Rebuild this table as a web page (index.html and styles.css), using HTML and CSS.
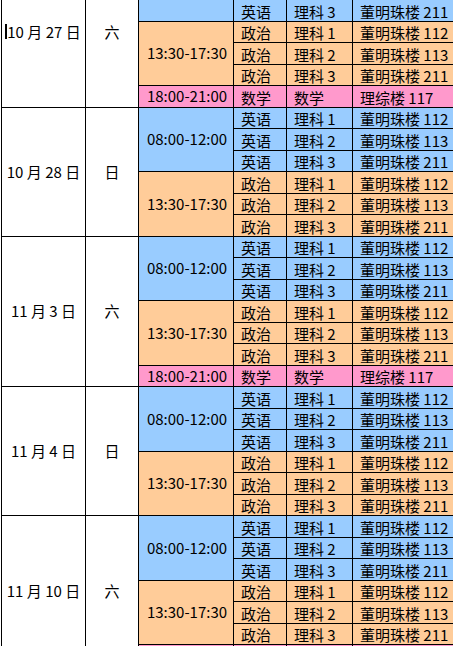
FILE: index.html
```html
<!DOCTYPE html>
<html lang="zh-CN">
<head>
<meta charset="utf-8">
<title>考试安排</title>
<link rel="stylesheet" href="styles.css">
</head>
<body>
<div class="viewport">
  <div class="sheet">
    <!-- 10月27日 -->
    <div class="c date r7"><span class="dtext caret-host">10 月 27 日</span></div>
    <div class="c day r7">六</div>
    <div class="c time am r3">08:00-12:00</div>
    <div class="c subj am">英语</div><div class="c course am">理科 1</div><div class="c room am">董明珠楼 112</div>
    <div class="c subj am">英语</div><div class="c course am">理科 2</div><div class="c room am">董明珠楼 113</div>
    <div class="c subj am">英语</div><div class="c course am">理科 3</div><div class="c room am">董明珠楼 211</div>
    <div class="c time pm r3">13:30-17:30</div>
    <div class="c subj pm">政治</div><div class="c course pm">理科 1</div><div class="c room pm">董明珠楼 112</div>
    <div class="c subj pm">政治</div><div class="c course pm">理科 2</div><div class="c room pm">董明珠楼 113</div>
    <div class="c subj pm">政治</div><div class="c course pm">理科 3</div><div class="c room pm">董明珠楼 211</div>
    <div class="c time ev">18:00-21:00</div>
    <div class="c subj ev">数学</div><div class="c course ev">数学</div><div class="c room ev">理综楼 117</div>

    <!-- 10月28日 -->
    <div class="c date r6">10 月 28 日</div>
    <div class="c day r6">日</div>
    <div class="c time am r3">08:00-12:00</div>
    <div class="c subj am">英语</div><div class="c course am">理科 1</div><div class="c room am">董明珠楼 112</div>
    <div class="c subj am">英语</div><div class="c course am">理科 2</div><div class="c room am">董明珠楼 113</div>
    <div class="c subj am">英语</div><div class="c course am">理科 3</div><div class="c room am">董明珠楼 211</div>
    <div class="c time pm r3">13:30-17:30</div>
    <div class="c subj pm">政治</div><div class="c course pm">理科 1</div><div class="c room pm">董明珠楼 112</div>
    <div class="c subj pm">政治</div><div class="c course pm">理科 2</div><div class="c room pm">董明珠楼 113</div>
    <div class="c subj pm">政治</div><div class="c course pm">理科 3</div><div class="c room pm">董明珠楼 211</div>

    <!-- 11月3日 -->
    <div class="c date r7">11 月 3 日</div>
    <div class="c day r7">六</div>
    <div class="c time am r3">08:00-12:00</div>
    <div class="c subj am">英语</div><div class="c course am">理科 1</div><div class="c room am">董明珠楼 112</div>
    <div class="c subj am">英语</div><div class="c course am">理科 2</div><div class="c room am">董明珠楼 113</div>
    <div class="c subj am">英语</div><div class="c course am">理科 3</div><div class="c room am">董明珠楼 211</div>
    <div class="c time pm r3">13:30-17:30</div>
    <div class="c subj pm">政治</div><div class="c course pm">理科 1</div><div class="c room pm">董明珠楼 112</div>
    <div class="c subj pm">政治</div><div class="c course pm">理科 2</div><div class="c room pm">董明珠楼 113</div>
    <div class="c subj pm">政治</div><div class="c course pm">理科 3</div><div class="c room pm">董明珠楼 211</div>
    <div class="c time ev">18:00-21:00</div>
    <div class="c subj ev">数学</div><div class="c course ev">数学</div><div class="c room ev">理综楼 117</div>

    <!-- 11月4日 -->
    <div class="c date r6">11 月 4 日</div>
    <div class="c day r6">日</div>
    <div class="c time am r3">08:00-12:00</div>
    <div class="c subj am">英语</div><div class="c course am">理科 1</div><div class="c room am">董明珠楼 112</div>
    <div class="c subj am">英语</div><div class="c course am">理科 2</div><div class="c room am">董明珠楼 113</div>
    <div class="c subj am">英语</div><div class="c course am">理科 3</div><div class="c room am">董明珠楼 211</div>
    <div class="c time pm r3">13:30-17:30</div>
    <div class="c subj pm">政治</div><div class="c course pm">理科 1</div><div class="c room pm">董明珠楼 112</div>
    <div class="c subj pm">政治</div><div class="c course pm">理科 2</div><div class="c room pm">董明珠楼 113</div>
    <div class="c subj pm">政治</div><div class="c course pm">理科 3</div><div class="c room pm">董明珠楼 211</div>

    <!-- 11月10日 -->
    <div class="c date r7">11 月 10 日</div>
    <div class="c day r7">六</div>
    <div class="c time am r3">08:00-12:00</div>
    <div class="c subj am">英语</div><div class="c course am">理科 1</div><div class="c room am">董明珠楼 112</div>
    <div class="c subj am">英语</div><div class="c course am">理科 2</div><div class="c room am">董明珠楼 113</div>
    <div class="c subj am">英语</div><div class="c course am">理科 3</div><div class="c room am">董明珠楼 211</div>
    <div class="c time pm r3">13:30-17:30</div>
    <div class="c subj pm">政治</div><div class="c course pm">理科 1</div><div class="c room pm">董明珠楼 112</div>
    <div class="c subj pm">政治</div><div class="c course pm">理科 2</div><div class="c room pm">董明珠楼 113</div>
    <div class="c subj pm">政治</div><div class="c course pm">理科 3</div><div class="c room pm">董明珠楼 211</div>
    <div class="c time ev">18:00-21:00</div>
    <div class="c subj ev">数学</div><div class="c course ev">数学</div><div class="c room ev">理综楼 117</div>
  </div>
</div>
</body>
</html>
```
FILE: styles.css
```css
html, body {
  margin: 0;
  padding: 0;
  background: #ffffff;
  overflow: hidden;
}

.viewport {
  width: 453px;
  height: 646px;
  overflow: hidden;
}

.sheet {
  display: grid;
  grid-template-columns: 83px 52px 94px 52px 65px 130px;
  grid-template-rows: repeat(33, 20.5px);
  gap: 1px;
  background: #000000;
  padding-left: 1px;
  margin-left: 1px;
  margin-top: -43px;
  width: max-content;
  font-family: "Noto Sans CJK SC", "Noto Sans", sans-serif;
  font-size: 15px;
  color: #000000;
}

.c {
  display: flex;
  line-height: 16px;
  white-space: nowrap;
  overflow: hidden;
}

.date, .day {
  background: #ffffff;
  align-items: center;
  justify-content: center;
}
.date { grid-column: 1; }
.day { grid-column: 2; }

.time {
  grid-column: 3;
  align-items: center;
  justify-content: center;
  padding-left: 2px;
}

.subj, .course, .room {
  align-items: flex-end;
  padding: 0 0 1px 7px;
}
.subj { grid-column: 4; }
.course { grid-column: 5; }
.room { grid-column: 6; }

.r7 { grid-row: span 7; }
.r6 { grid-row: span 6; }
.r3 { grid-row: span 3; }

.am { background: #99ccff; }
.pm { background: #ffcc99; }
.ev { background: #ff99cc; }

.caret-host {
  position: relative;
  padding-left: 1px;
}
.caret-host::before {
  content: "";
  position: absolute;
  left: -1px;
  top: 0;
  width: 2px;
  height: 15px;
  background: #000000;
}
```
